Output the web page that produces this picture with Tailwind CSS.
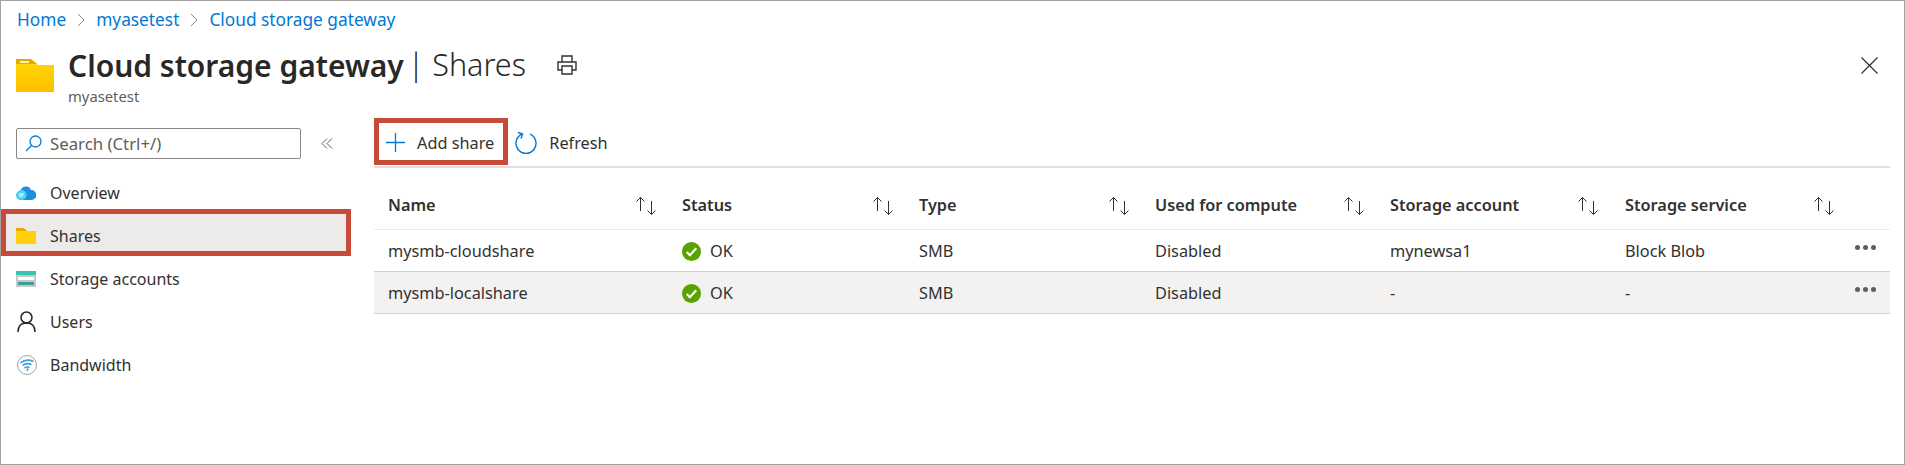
<!DOCTYPE html>
<html lang="en">
<head>
  <meta charset="UTF-8">
  <title>Cloud storage gateway | Shares</title>
  <script src="https://cdn.jsdelivr.net/npm/@tailwindcss/browser@4"></script>
</head>
<body class="bg-white font-['Noto_Sans','Open_Sans',sans-serif] text-[#323130] overflow-hidden">
  <div class="h-[465px] w-[1905px] border border-[#a3a3a3] flex flex-col">

    <!-- Breadcrumb -->
    <nav class="h-[37px] mb-[8px] pl-[16px] flex items-center text-[17.3px] text-[#0078d4] shrink-0">
      <a href="#">Home</a>
      <svg class="w-[8px] h-[14px] mx-[11px]" viewBox="0 0 8 14" fill="none" stroke="#8a8886"><path d="M1 1l6 6-6 6"/></svg>
      <a href="#">myasetest</a>
      <svg class="w-[8px] h-[14px] mx-[11px]" viewBox="0 0 8 14" fill="none" stroke="#8a8886"><path d="M1 1l6 6-6 6"/></svg>
      <a href="#">Cloud storage gateway</a>
    </nav>

    <!-- Title -->
    <header class="flex items-start pl-[15px] pr-[26px] shrink-0">
      <svg class="w-[38px] h-[33px] mt-[13px] shrink-0" viewBox="0 0 38 33">
        <defs><linearGradient id="fold" x1="0" y1="0" x2="0" y2="1"><stop offset="0" stop-color="#ffd800"/><stop offset="1" stop-color="#fcc000"/></linearGradient></defs>
        <path d="M0 1h16l6 5h16v27H0z" fill="url(#fold)"/>
        <path d="M0 0h15l6 5H0z" fill="#e8a900"/>
        <rect x="4" y="2" width="9" height="2" fill="#fff3b0"/>
      </svg>
      <div class="ml-[14px]">
        <div class="flex items-center h-[38px]">
          <h1 class="text-[30px] text-[#292827] font-semibold">Cloud storage gateway</h1>
          <span class="ml-[4px] text-[30.5px] font-light text-[#292827]">| Shares</span>
          <svg class="w-[20px] h-[20px] ml-[31px]" viewBox="0 0 20 20" fill="none" stroke="#323130" stroke-width="1.4"><path d="M5 7V1h10v6M5 15H1V7h18v8h-4"/><path d="M5 11h10v8H5z"/></svg>
        </div>
        <p class="text-[14.8px] leading-[24px] text-[#605e5c]">myasetest</p>
      </div>
      <svg class="w-[17px] h-[17px] ml-auto mt-[11px]" viewBox="0 0 17 17" fill="none" stroke="#323130" stroke-width="1.2"><path d="M0.5 0.5l16 16M16.5 0.5l-16 16"/></svg>
    </header>

    <div class="flex flex-1 mt-[10px]">
      <!-- Sidebar -->
      <aside class="w-[350px] shrink-0">
        <div class="pt-[10px] pl-[15px] flex items-center">
          <div class="w-[285px] h-[31px] border border-[#8a8886] rounded-[2px] flex items-center pl-[8px] text-[16.8px] text-[#605e5c]">
            <svg class="w-[17px] h-[17px] mr-[8px]" viewBox="0 0 17 17" fill="none" stroke="#0078d4" stroke-width="1.3"><circle cx="10.5" cy="6.5" r="5.5"/><path d="M6.5 10.5L1 16"/></svg>
            Search (Ctrl+/)
          </div>
          <svg class="w-[12px] h-[11px] ml-[20px]" viewBox="0 0 12 11" fill="none" stroke="#605e5c"><path d="M6 0.5l-5 5 5 5M11 0.5l-5 5 5 5"/></svg>
        </div>
        <ul class="mt-[12px] text-[16px]">
          <li class="h-[43px] flex items-center pl-[15px]">
            <svg class="w-[20px] h-[15px] mr-[14px]" viewBox="0 0 20 15">
              <path d="M5 15a4.5 4.5 0 0 1-.5-9A5.5 5.5 0 0 1 15 5a5 5 0 0 1 .5 10z" fill="#1a8fe3"/>
              <circle cx="5.5" cy="10" r="5" fill="#50d4f5"/>
              <path d="M3 9h5M3 11h4" stroke="#fff" stroke-width="1"/>
            </svg>
            Overview
          </li>
          <li class="relative h-[43px] flex items-center pl-[15px]">
            <div class="absolute left-0 top-[-5px] w-[350px] h-[47px] border-[5px] border-[#c84b39] bg-[#edebe9]"></div>
            <svg class="relative w-[20px] h-[16px] mr-[14px]" viewBox="0 0 20 16">
              <path d="M0 1h8l3 2h9v13H0z" fill="#ffcf0a"/>
              <path d="M0 0h8l3 3H0z" fill="#e8a900"/>
            </svg>
            <span class="relative">Shares</span>
          </li>
          <li class="h-[43px] flex items-center pl-[15px]">
            <svg class="w-[20px] h-[16px] mr-[14px]" viewBox="0 0 20 16">
              <rect width="20" height="16" fill="#c8c8c8"/>
              <rect width="20" height="4" fill="#37c2b1"/>
              <rect x="2" y="6" width="16" height="3" fill="#fff"/>
              <rect x="2" y="11" width="16" height="3" fill="#3e9e90"/>
            </svg>
            Storage accounts
          </li>
          <li class="h-[43px] flex items-center pl-[16px]">
            <svg class="w-[19px] h-[21px] mr-[14px]" viewBox="0 0 19 21" fill="none" stroke="#252423" stroke-width="1.5"><circle cx="9.5" cy="6.5" r="5.5"/><path d="M1 21c0-6 3.5-9 8.5-9s8.5 3 8.5 9"/></svg>
            Users
          </li>
          <li class="h-[43px] flex items-center pl-[16px]">
            <svg class="w-[20px] h-[20px] mr-[13px]" viewBox="0 0 20 20" fill="none">
              <circle cx="10" cy="10" r="9.5" stroke="#a3a3a3"/>
              <path d="M3.5 8C7 5 12 4.5 16.5 6.5M5.5 10.5C8 8.5 11.5 8.2 14.5 9.5M7.5 13c1.5-1 3.5-1.2 5-.3" stroke="#3aa0e0" stroke-width="1.6"/>
              <path d="M10 16l1-2.5" stroke="#3aa0e0" stroke-width="1.6"/>
            </svg>
            Bandwidth
          </li>
        </ul>
      </aside>

      <!-- Main -->
      <main class="ml-[23px] w-[1516px]">
        <div class="relative flex items-center h-[50px] pl-[12px] text-[16.3px] border-b-2 border-[#e1dfdd]">
          <div class="absolute left-0 top-0 w-[134px] h-[47px] border-[5px] border-[#c84b39]"></div>
          <svg class="w-[19px] h-[19px] mr-[12px]" viewBox="0 0 19 19" stroke="#0078d4" stroke-width="1.3"><path d="M9.5 0v19M0 9.5h19"/></svg>
          <span class="pt-[2px]">Add share</span>
          <svg class="w-[22px] h-[23px] ml-[21px] mr-[12px]" viewBox="0 0 22 23" fill="none" stroke="#0078d4" stroke-width="1.4"><path d="M7 3.2a10 10 0 1 0 8 0"/><path d="M3 1.5l4.5 1.5-1.5 4.5"/></svg>
          <span class="pt-[2px]">Refresh</span>
        </div>

        <div class="grid grid-cols-[308px_237px_236px_235px_235px_225px_40px] text-[16.3px]">
          <div class="contents font-semibold">
            <div class="h-[62px] pt-[14px] pl-[14px] pr-[25px] flex items-center justify-between border-b border-[#edebe9]">Name
              <svg class="w-[22px] h-[18px]" viewBox="0 0 22 18" fill="none" stroke="#323130"><path d="M5.5 14V0.5M1.5 4.5l4-4 4 4M16.5 4v13.5M12.5 13.5l4 4 4-4"/></svg>
            </div>
            <div class="h-[62px] pt-[14px] pr-[25px] flex items-center justify-between border-b border-[#edebe9]">Status
              <svg class="w-[22px] h-[18px]" viewBox="0 0 22 18" fill="none" stroke="#323130"><path d="M5.5 14V0.5M1.5 4.5l4-4 4 4M16.5 4v13.5M12.5 13.5l4 4 4-4"/></svg>
            </div>
            <div class="h-[62px] pt-[14px] pr-[25px] flex items-center justify-between border-b border-[#edebe9]">Type
              <svg class="w-[22px] h-[18px]" viewBox="0 0 22 18" fill="none" stroke="#323130"><path d="M5.5 14V0.5M1.5 4.5l4-4 4 4M16.5 4v13.5M12.5 13.5l4 4 4-4"/></svg>
            </div>
            <div class="h-[62px] pt-[14px] pr-[25px] flex items-center justify-between border-b border-[#edebe9]">Used for compute
              <svg class="w-[22px] h-[18px]" viewBox="0 0 22 18" fill="none" stroke="#323130"><path d="M5.5 14V0.5M1.5 4.5l4-4 4 4M16.5 4v13.5M12.5 13.5l4 4 4-4"/></svg>
            </div>
            <div class="h-[62px] pt-[14px] pr-[26px] flex items-center justify-between border-b border-[#edebe9]">Storage account
              <svg class="w-[22px] h-[18px]" viewBox="0 0 22 18" fill="none" stroke="#323130"><path d="M5.5 14V0.5M1.5 4.5l4-4 4 4M16.5 4v13.5M12.5 13.5l4 4 4-4"/></svg>
            </div>
            <div class="h-[62px] pt-[14px] pr-[15px] flex items-center justify-between border-b border-[#edebe9]">Storage service
              <svg class="w-[22px] h-[18px]" viewBox="0 0 22 18" fill="none" stroke="#323130"><path d="M5.5 14V0.5M1.5 4.5l4-4 4 4M16.5 4v13.5M12.5 13.5l4 4 4-4"/></svg>
            </div>
            <div class="h-[62px] border-b border-[#edebe9]"></div>
          </div>

          <div class="contents">
            <div class="h-[42px] pl-[14px] pt-[2px] flex items-center border-b border-[#d2d0ce]">mysmb-cloudshare</div>
            <div class="h-[42px] pt-[2px] flex items-center border-b border-[#d2d0ce]">
              <svg class="w-[19px] h-[19px] mr-[9px]" viewBox="0 0 18 18"><circle cx="9" cy="9" r="9" fill="#57a300"/><path d="M4.5 9.5l3 3 6-6.5" fill="none" stroke="#fff" stroke-width="2"/></svg>
              OK
            </div>
            <div class="h-[42px] pt-[2px] flex items-center border-b border-[#d2d0ce]">SMB</div>
            <div class="h-[42px] pt-[2px] flex items-center border-b border-[#d2d0ce]">Disabled</div>
            <div class="h-[42px] pt-[2px] flex items-center border-b border-[#d2d0ce]">mynewsa1</div>
            <div class="h-[42px] pt-[2px] flex items-center border-b border-[#d2d0ce]">Block Blob</div>
            <div class="h-[42px] pl-[5px] pb-[6px] flex items-center gap-[3px] border-b border-[#d2d0ce]">
              <span class="w-[5px] h-[5px] rounded-full bg-[#605e5c]"></span><span class="w-[5px] h-[5px] rounded-full bg-[#605e5c]"></span><span class="w-[5px] h-[5px] rounded-full bg-[#605e5c]"></span>
            </div>
          </div>

          <div class="contents">
            <div class="h-[42px] pl-[14px] pt-[2px] bg-[#f3f2f1] flex items-center border-b border-[#d2d0ce]">mysmb-localshare</div>
            <div class="h-[42px] pt-[2px] bg-[#f3f2f1] flex items-center border-b border-[#d2d0ce]">
              <svg class="w-[19px] h-[19px] mr-[9px]" viewBox="0 0 18 18"><circle cx="9" cy="9" r="9" fill="#57a300"/><path d="M4.5 9.5l3 3 6-6.5" fill="none" stroke="#fff" stroke-width="2"/></svg>
              OK
            </div>
            <div class="h-[42px] pt-[2px] bg-[#f3f2f1] flex items-center border-b border-[#d2d0ce]">SMB</div>
            <div class="h-[42px] pt-[2px] bg-[#f3f2f1] flex items-center border-b border-[#d2d0ce]">Disabled</div>
            <div class="h-[42px] pt-[2px] bg-[#f3f2f1] flex items-center border-b border-[#d2d0ce]">-</div>
            <div class="h-[42px] pt-[2px] bg-[#f3f2f1] flex items-center border-b border-[#d2d0ce]">-</div>
            <div class="h-[42px] pl-[5px] pb-[6px] bg-[#f3f2f1] flex items-center gap-[3px] border-b border-[#d2d0ce]">
              <span class="w-[5px] h-[5px] rounded-full bg-[#605e5c]"></span><span class="w-[5px] h-[5px] rounded-full bg-[#605e5c]"></span><span class="w-[5px] h-[5px] rounded-full bg-[#605e5c]"></span>
            </div>
          </div>
        </div>
      </main>
    </div>
  </div>
</body>
</html>
